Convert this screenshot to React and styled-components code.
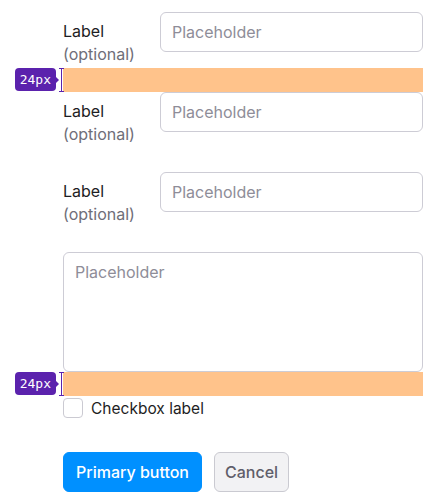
import React from "react";
import styled, { createGlobalStyle } from "styled-components";

const Global = createGlobalStyle`
  html, body { margin: 0; padding: 0; background: #ffffff; }
  body { font-family: Inter, "Noto Sans", sans-serif; -webkit-font-smoothing: antialiased; }
  * { box-sizing: border-box; }
`;

const Form = styled.form`
  display: flex;
  flex-direction: column;
  width: 435px;
  padding: 12px 12px 12px 63px;
`;

const Row = styled.div`
  display: grid;
  grid-template-columns: 85px 1fr;
  column-gap: 12px;
  align-items: start;
`;

const LabelBox = styled.label`
  display: flex;
  flex-direction: column;
  padding: 8px 0 2px;
  font-size: 16px;
  line-height: 23px;
  color: #1e1e24;
`;

const Optional = styled.span`
  color: #6f6e78;
`;

const Input = styled.input`
  height: 40px;
  width: 100%;
  border: 1px solid #cdccd5;
  border-radius: 6px;
  padding: 0 11px;
  font-family: inherit;
  font-size: 16px;
  color: #1e1e24;
  background: #fff;
  outline: none;
  &::placeholder { color: #8e8d98; }
`;

const TextArea = styled.textarea`
  display: block;
  height: 120px;
  width: 100%;
  resize: none;
  border: 1px solid #cdccd5;
  border-radius: 6px;
  padding: 8px 11px;
  font-family: inherit;
  font-size: 16px;
  line-height: 22px;
  color: #1e1e24;
  background: #fff;
  outline: none;
  &::placeholder { color: #8e8d98; }
`;

const Gap = styled.div`
  position: relative;
  height: ${(p) => p.$size}px;
  background: ${(p) => (p.$marked ? "#ffc38b" : "transparent")};
`;

const Badge = styled.span`
  position: absolute;
  right: 100%;
  top: 0;
  margin-right: 7px;
  height: 23px;
  padding: 0 5px;
  display: flex;
  align-items: center;
  background: #5b22ad;
  color: #fff;
  border-radius: 4px;
  font-family: "DejaVu Sans Mono", monospace;
  font-size: 13px;
  &::after {
    content: "";
    position: absolute;
    left: 100%;
    top: 50%;
    margin-top: -3px;
    border-left: 3px solid #5b22ad;
    border-top: 3px solid transparent;
    border-bottom: 3px solid transparent;
  }
`;

const Beam = styled.span`
  position: absolute;
  right: 100%;
  top: 0;
  bottom: 0;
  width: 5px;
  margin-right: -1px;
  border-top: 1px solid #5b22ad;
  border-bottom: 1px solid #5b22ad;
  &::before {
    content: "";
    position: absolute;
    left: 2px;
    top: 0;
    bottom: 0;
    width: 1px;
    background: #5b22ad;
  }
`;

const CheckRow = styled.label`
  display: flex;
  align-items: center;
  gap: 8px;
  height: 24px;
  font-size: 15.5px;
  color: #1e1e24;
`;

const Box = styled.span`
  width: 20px;
  height: 20px;
  border: 1px solid #cbcad2;
  border-radius: 4px;
  background: #fff;
`;

const Actions = styled.div`
  display: flex;
  gap: 12px;
  margin-top: 32px;
`;

const Button = styled.button`
  height: 40px;
  padding: 0 ${(p) => (p.$primary ? 12 : 10)}px;
  border-radius: 6px;
  font-family: inherit;
  font-size: 16px;
  font-weight: 500;
  border: 1px solid ${(p) => (p.$primary ? "#0090ff" : "#cacad1")};
  background: ${(p) => (p.$primary ? "#0090ff" : "#f2f2f4")};
  color: ${(p) => (p.$primary ? "#ffffff" : "#5f5e6a")};
`;

function Field() {
  return (
    <Row>
      <LabelBox>
        <span>Label</span>
        <Optional>(optional)</Optional>
      </LabelBox>
      <Input placeholder="Placeholder" />
    </Row>
  );
}

function Marked() {
  return (
    <Gap $size={24} $marked>
      <Beam />
      <Badge>24px</Badge>
    </Gap>
  );
}

export default function App() {
  return (
    <>
      <Global />
      <Form onSubmit={(e) => e.preventDefault()}>
        <Field />
        <Marked />
        <Field />
        <Gap $size={24} />
        <Field />
        <Gap $size={24} />
        <TextArea placeholder="Placeholder" />
        <Marked />
        <CheckRow>
          <Box />
          Checkbox label
        </CheckRow>
        <Actions>
          <Button type="button" $primary>Primary button</Button>
          <Button type="button">Cancel</Button>
        </Actions>
      </Form>
    </>
  );
}
